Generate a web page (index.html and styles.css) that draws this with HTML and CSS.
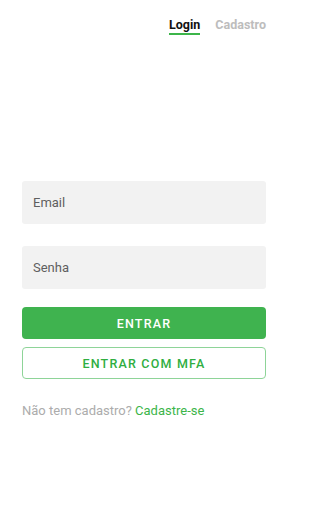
FILE: index.html
```html
<!DOCTYPE html>
<html lang="pt">
<head>
<meta charset="utf-8">
<link rel="stylesheet" href="styles.css">
</head>
<body>
<div class="tabs">
  <span class="tab active">Login</span>
  <span class="tab">Cadastro</span>
</div>
<form class="form">
  <div class="field">Email</div>
  <div class="field field-second">Senha</div>
  <button type="button" class="btn btn-primary">ENTRAR</button>
  <button type="button" class="btn btn-outline">ENTRAR COM MFA</button>
  <p class="signup">Não tem cadastro? <span class="link">Cadastre-se</span></p>
</form>
</body>
</html>
```
FILE: styles.css
```css
* { box-sizing: border-box; }
html, body { margin: 0; padding: 0; background: #fff; }
body { font-family: Roboto, "Noto Sans", sans-serif; width: 288px; height: 512px; }
.tabs { display: flex; justify-content: flex-end; gap: 15px; padding: 0 22px 0 0; }
.tab { font-size: 12.5px; font-weight: 700; line-height: 15px; padding-top: 17px; padding-bottom: 1px; border-bottom: 2px solid transparent; color: #bdbdbd; }
.tab.active { color: #111; border-bottom-color: #3cb54a; }
.form { display: flex; flex-direction: column; margin: 146px 22px 0; }
.field { height: 43px; background: #f2f2f2; border-radius: 3px; padding-left: 11px; display: flex; align-items: center; font-size: 13px; color: #5f5f5f; }
.field-second { margin-top: 22px; }
.btn { height: 32px; border-radius: 4px; font-family: Roboto, "Noto Sans", sans-serif; font-size: 12.5px; font-weight: 500; letter-spacing: 1.2px; padding: 0; cursor: pointer; }
.btn-primary { margin-top: 18px; background: #3fb34f; color: #fff; border: none; }
.btn-outline { margin-top: 8px; background: #fff; color: #2fae41; border: 1px solid #8ed498; }
.signup { margin: 24px 0 0; font-size: 13px; line-height: 15px; color: #acacac; }
.link { color: #3cb54a; }
```
